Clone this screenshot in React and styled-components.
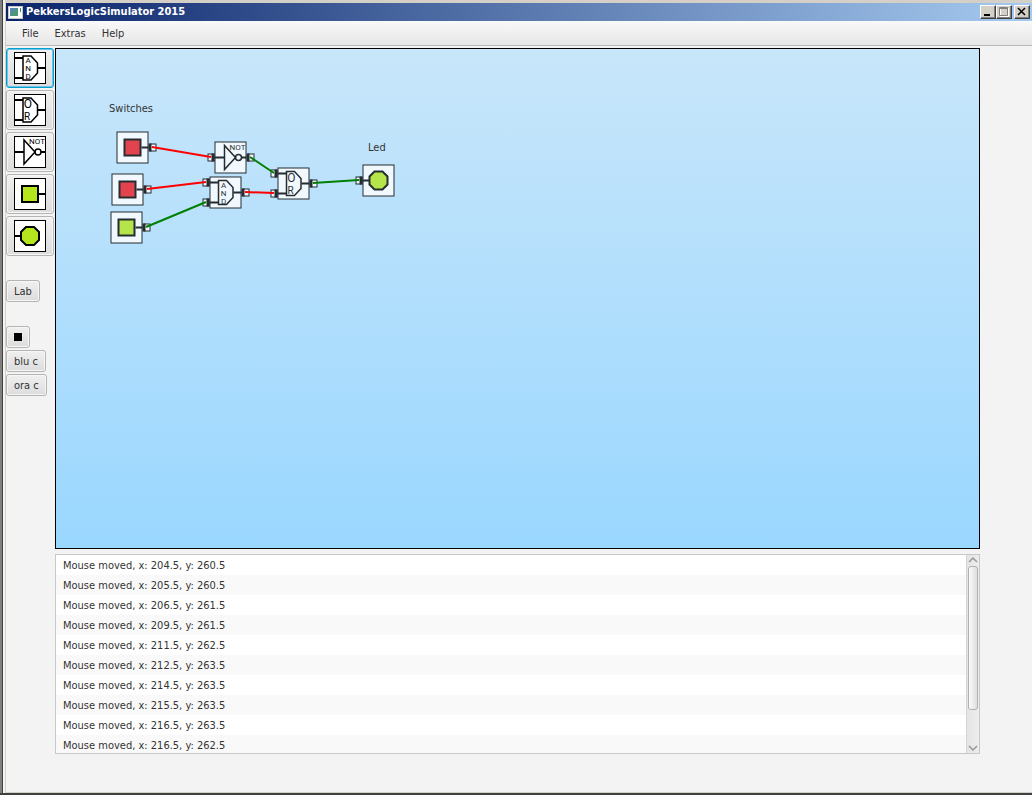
import React from 'react';
import styled, { createGlobalStyle, css } from 'styled-components';

const GlobalStyle = createGlobalStyle`
  *, *::before, *::after { box-sizing: border-box; }
  body {
    margin: 0;
    background: #f3f3f3;
    color: #333;
    font: 11px/16px "DejaVu Sans Condensed", "DejaVu Sans", Tahoma, sans-serif;
  }
  button { font: inherit; color: inherit; }
`;

const Frame = styled.div`
  display: flex;
  min-height: 100vh;
  border-bottom: 2px solid #404040;
`;

const FrameEdge = styled.div`
  flex: none;
  width: 6px;
  background: linear-gradient(to right, #808080 0 2px, #404040 2px 3px, #f4f4f0 3px 5px, #d4d0c8 5px 6px);
`;

const Win = styled.div`
  flex: 1;
  min-width: 0;
  display: flex;
  flex-direction: column;
  border-top: 3px solid #d4d0c8;
  border-bottom: 1px solid #d4d0c8;
`;

const TitleBar = styled.header`
  display: flex;
  align-items: center;
  height: 18px;
  padding: 0 2px;
  background: linear-gradient(to right, #0a246a, #a6caf0);
  color: #fff;
`;

const Title = styled.h1`
  flex: 1;
  margin: 0 0 0 2px;
  font-size: 11px;
  line-height: 18px;
  font-weight: bold;
`;

const WindowButtons = styled.div`
  display: flex;
`;

const WindowButton = styled.button`
  display: block;
  width: 16px;
  height: 14px;
  padding: 0;
  border: 1px solid;
  border-color: #fff #404040 #404040 #fff;
  background: #d4d0c8;
  box-shadow: inset -1px -1px #808080;
  margin-left: ${(p) => (p.$apart ? '2px' : '0')};
  svg { display: block; }
`;

const MenuBar = styled.nav`
  display: flex;
  gap: 16px;
  height: 25px;
  padding: 5px 16px 3px;
  background: linear-gradient(#f9f9f9, #e6e6e6);
  border-bottom: 1px solid #b9b9b9;
`;

const MenuItem = styled.button`
  padding: 0;
  border: 0;
  background: none;
  line-height: 16px;
`;

const Body = styled.div`
  display: flex;
  gap: 1px;
  padding: 2px 52px 38px 0;
`;

const Toolbar = styled.aside`
  flex: none;
  width: 48px;
  display: flex;
  flex-direction: column;
  align-items: flex-start;
  gap: 24px;
`;

const ToolGroup = styled.div`
  display: flex;
  flex-direction: column;
  align-items: flex-start;
  gap: 2px;
`;

const Button = styled.button`
  height: 22px;
  padding: 2px 7px 0;
  border: 1px solid #b4b4b4;
  border-radius: 3px;
  background: linear-gradient(#f0f0f0, #dcdcdc);
  box-shadow: inset 0 0 0 1px #f6f6f6;
  line-height: 18px;
  svg { display: block; }
`;

const IconButton = styled(Button)`
  padding: 0 7px;
`;

const PartButton = styled(IconButton)`
  width: 48px;
  height: 40px;
  ${(p) =>
    p.$active &&
    css`
      border-color: #039ed3;
      box-shadow: inset 0 0 0 1px #6cc5e4;
    `}
`;

const Main = styled.main`
  flex: 1;
  min-width: 0;
  display: flex;
  flex-direction: column;
  gap: 5px;
`;

const Canvas = styled.section`
  position: relative;
  height: 501px;
  border: 1px solid #000;
  background: linear-gradient(#c8e6fa, #9ad7ff);
  overflow: hidden;
`;

const Wires = styled.svg`
  position: absolute;
  inset: 0;
  width: 100%;
  height: 100%;
`;

const Placed = styled.div`
  position: absolute;
  left: ${(p) => p.$x}px;
  top: ${(p) => p.$y}px;
  svg { display: block; }
`;

const LogPanel = styled.section`
  display: flex;
  height: 200px;
  border: 1px solid #c8c8c8;
  background: #fff;
`;

const LogList = styled.ul`
  flex: 1;
  margin: 0;
  padding: 0;
  list-style: none;
  overflow: hidden;
`;

const LogRow = styled.li`
  height: 20px;
  padding: 2px 7px 0;
  line-height: 18px;
  &:nth-child(even) { background: #f9f9f9; }
`;

const ScrollBar = styled.div`
  display: flex;
  flex-direction: column;
  width: 13px;
  border-left: 1px solid #d4d4d4;
  background: linear-gradient(to right, #e4e4e4, #ededed);
`;

const ScrollArrow = styled.button`
  display: block;
  height: 11px;
  padding: 0;
  border: 0;
  background: none;
  svg { display: block; margin: 0 auto; }
`;

const ScrollTrack = styled.div`
  flex: 1;
  padding: 0 1px;
`;

const ScrollThumb = styled.div`
  height: 82%;
  border: 1px solid #b0b0b0;
  border-radius: 3px;
  background: linear-gradient(to right, #fafafa, #dedede);
`;

const Glyph = styled.text`
  font-family: Roboto, sans-serif;
  font-size: ${(p) => p.$size}px;
  text-anchor: middle;
  fill: #000;
  stroke: none;
`;

const GATE_BODY = 'M9 4H17L23.5 11V21L17 28H9Z';

function PartDrawing({ kind, on = true }) {
  const fill = on ? '#b5e61d' : '#ed1c24';
  switch (kind) {
    case 'and':
      return (
        <>
          <path d="M0 6H9M0 26H9M24 16H32" strokeWidth="2" />
          <path d={GATE_BODY} />
          <Glyph $size={8} x="14" y="11">A</Glyph>
          <Glyph $size={8} x="14" y="19">N</Glyph>
          <Glyph $size={8} x="14" y="27">D</Glyph>
        </>
      );
    case 'or':
      return (
        <>
          <path d="M0 6H9M0 26H9M24 16H32" strokeWidth="2" />
          <path d={GATE_BODY} />
          <Glyph $size={12} x="14" y="14">O</Glyph>
          <Glyph $size={10} x="13" y="26">R</Glyph>
        </>
      );
    case 'not':
      return (
        <>
          <path d="M0 16H10M27 16H32" strokeWidth="2" />
          <path d="M10 4V28L21 16Z" />
          <circle cx="24" cy="16" r="3" />
          <Glyph $size={8} x="23" y="8">NOT</Glyph>
        </>
      );
    case 'switch':
      return (
        <>
          <path d="M25 16H32" strokeWidth="2" />
          <rect x="8" y="8" width="16" height="16" fill={fill} strokeWidth="2" />
        </>
      );
    default:
      return (
        <>
          <path d="M0 16H7" strokeWidth="2" />
          <path d="M12 7H20L25 12V20L20 25H12L7 20V12Z" fill={fill} strokeWidth="2" />
        </>
      );
  }
}

function PartIcon({ kind }) {
  return (
    <svg width="32" height="32" viewBox="0 0 32 32" fill="none" stroke="#000" strokeWidth="1.5">
      <rect x="0.5" y="0.5" width="31" height="31" fill="#fff" strokeWidth="1" />
      <PartDrawing kind={kind} />
    </svg>
  );
}

const PORTS = {
  and: { left: [6, 26], right: [16] },
  or: { left: [6, 26], right: [16] },
  not: { left: [16], right: [16] },
  switch: { left: [], right: [16] },
  led: { left: [16], right: [] },
};

/* The drawing leaves 8px on both sides of the 32px box for the ports. */
function Part({ kind, on, x, y }) {
  const ports = PORTS[kind];
  return (
    <Placed $x={x - 8} $y={y}>
      <svg width="49" height="33" viewBox="-8.5 -0.5 49 33" fill="none" stroke="#000" strokeWidth="1.5">
        <g opacity="0.8">
          <rect x="0.5" y="0.5" width="31" height="31" fill="#fff" strokeWidth="1" />
          <PartDrawing kind={kind} on={on} />
          {ports.left.map((cy) => (
            <g key={cy}>
              <rect x="-6.5" y={cy - 3.5} width="6" height="7" fill="#fff" strokeWidth="1" />
              <rect x="-3" y={cy - 4} width="3" height="8" fill="#000" stroke="none" />
            </g>
          ))}
          {ports.right.map((cy) => (
            <g key={cy}>
              <rect x="33.5" y={cy - 3.5} width="6" height="7" fill="#fff" strokeWidth="1" />
              <rect x="32" y={cy - 4} width="3" height="8" fill="#000" stroke="none" />
            </g>
          ))}
        </g>
      </svg>
    </Placed>
  );
}

const PARTS = [
  { kind: 'switch', on: false, x: 60, y: 82 },
  { kind: 'switch', on: false, x: 55, y: 124 },
  { kind: 'switch', on: true, x: 54, y: 162 },
  { kind: 'not', x: 158, y: 92 },
  { kind: 'and', x: 153, y: 127 },
  { kind: 'or', x: 221, y: 118 },
  { kind: 'led', on: true, x: 306, y: 115 },
];

const WIRES = [
  { from: [96, 98], to: [155, 108], on: false },
  { from: [91, 140], to: [150, 133], on: false },
  { from: [90, 178], to: [150, 153], on: true },
  { from: [194, 108], to: [218, 124], on: true },
  { from: [189, 143], to: [218, 144], on: false },
  { from: [257, 134], to: [303, 131], on: true },
];

const TOOLS = [
  { kind: 'and', label: 'AND gate' },
  { kind: 'or', label: 'OR gate' },
  { kind: 'not', label: 'NOT gate' },
  { kind: 'switch', label: 'Switch' },
  { kind: 'led', label: 'Led' },
];

const MOVES = [
  ['204.5', '260.5'],
  ['205.5', '260.5'],
  ['206.5', '261.5'],
  ['209.5', '261.5'],
  ['211.5', '262.5'],
  ['212.5', '263.5'],
  ['214.5', '263.5'],
  ['215.5', '263.5'],
  ['216.5', '263.5'],
  ['216.5', '262.5'],
];

function AppIcon() {
  return (
    <svg width="16" height="14" viewBox="0 0 16 14">
      <rect x="0.5" y="1.5" width="14" height="12" fill="#fff" stroke="#c8c8c8" />
      <rect x="2" y="3" width="8" height="8" fill="#4c9a78" />
      <path d="M2 3H10L2 9Z" fill="#5a86b0" />
      <path d="M12.5 3V7" stroke="#3c8c6c" />
    </svg>
  );
}

export default function App() {
  return (
    <>
      <GlobalStyle />
      <Frame>
        <FrameEdge />
        <Win>
          <TitleBar>
            <AppIcon />
            <Title>PekkersLogicSimulator 2015</Title>
            <WindowButtons>
              <WindowButton aria-label="Minimize">
                <svg width="14" height="12"><path d="M3 8H9V10H3Z" /></svg>
              </WindowButton>
              <WindowButton aria-label="Maximize">
                <svg width="14" height="12" fill="none">
                  <path d="M3.500 2.500H11.500V10.500H3.500Z" stroke="#fff" />
                  <path d="M2.500 1.500H10.500V9.500H2.500ZM2 2.500H11" stroke="#808080" />
                </svg>
              </WindowButton>
              <WindowButton aria-label="Close" $apart>
                <svg width="14" height="12"><path d="M3 2L10 9M10 2L3 9" stroke="#000" strokeWidth="1.5" /></svg>
              </WindowButton>
            </WindowButtons>
          </TitleBar>
          <MenuBar>
            <MenuItem>File</MenuItem>
            <MenuItem>Extras</MenuItem>
            <MenuItem>Help</MenuItem>
          </MenuBar>
          <Body>
            <Toolbar>
              <ToolGroup>
                {TOOLS.map((tool, i) => (
                  <PartButton key={tool.kind} aria-label={tool.label} $active={i === 0}>
                    <PartIcon kind={tool.kind} />
                  </PartButton>
                ))}
              </ToolGroup>
              <Button>Lab</Button>
              <ToolGroup>
                <IconButton aria-label="Black">
                  <svg width="8" height="8"><rect width="8" height="8" /></svg>
                </IconButton>
                <Button>blu c</Button>
                <Button>ora c</Button>
              </ToolGroup>
            </Toolbar>
            <Main>
              <Canvas>
                <Placed $x={53} $y={52}>Switches</Placed>
                <Placed $x={312} $y={91}>Led</Placed>
                {PARTS.map((part, i) => (
                  <Part key={i} {...part} />
                ))}
                <Wires fill="none" strokeWidth="2">
                  {WIRES.map(({ from, to, on }, i) => (
                    <path key={i} d={`M${from}L${to}`} stroke={on ? '#008000' : '#ff0000'} />
                  ))}
                </Wires>
              </Canvas>
              <LogPanel>
                <LogList>
                  {MOVES.map(([x, y], i) => (
                    <LogRow key={i}>{`Mouse moved, x: ${x}, y: ${y}`}</LogRow>
                  ))}
                </LogList>
                <ScrollBar>
                  <ScrollArrow aria-label="Scroll up">
                    <svg width="10" height="9" fill="none" stroke="#969696" strokeWidth="1.5"><path d="M1 6L5 2L9 6" /></svg>
                  </ScrollArrow>
                  <ScrollTrack><ScrollThumb /></ScrollTrack>
                  <ScrollArrow aria-label="Scroll down">
                    <svg width="10" height="9" fill="none" stroke="#969696" strokeWidth="1.5"><path d="M1 3L5 7L9 3" /></svg>
                  </ScrollArrow>
                </ScrollBar>
              </LogPanel>
            </Main>
          </Body>
        </Win>
      </Frame>
    </>
  );
}
